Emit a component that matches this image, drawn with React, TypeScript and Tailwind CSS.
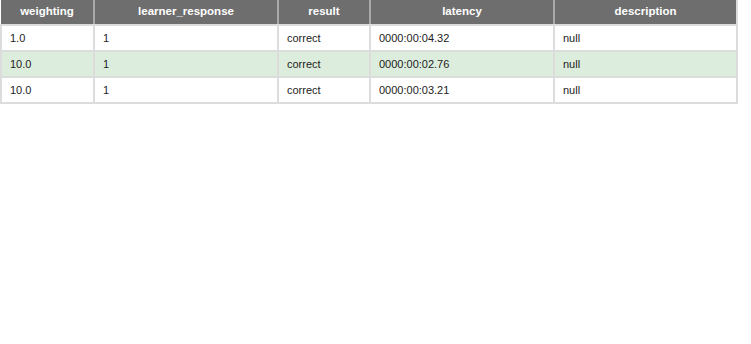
import React from "react";

const columns = ["weighting", "learner_response", "result", "latency", "description"];
const widths = [93, 184, 92, 184, 183];

const rows = [
  ["1.0", "1", "correct", "0000:00:04.32", "null"],
  ["10.0", "1", "correct", "0000:00:02.76", "null"],
  ["10.0", "1", "correct", "0000:00:03.21", "null"],
];

export default function App() {
  return (
    <div className="min-h-[344px] w-[751px] bg-white" style={{ fontFamily: '"Liberation Sans", Arial, sans-serif' }}>
      <table className="w-[736px] table-fixed border-collapse">
        <colgroup>
          {widths.map((w, i) => (
            <col key={i} style={{ width: w }} />
          ))}
        </colgroup>
        <thead>
          <tr className="h-[25px] bg-[#6e6e6e]">
            {columns.map((c) => (
              <th
                key={c}
                className="border-2 border-t-0 border-[#dcdcdc] border-x-[#a8a8a8] first:border-l-0 last:border-r-[#dcdcdc] p-0 text-center text-[11.5px] font-bold text-white"
              >
                {c}
              </th>
            ))}
          </tr>
        </thead>
        <tbody>
          {rows.map((r, i) => (
            <tr key={i} className={i === 1 ? "h-[26px] bg-[#ddeddd]" : "h-[26px] bg-white"}>
              {r.map((v, j) => (
                <td key={j} className="border-2 border-[#dcdcdc] px-[8px] py-0 text-left text-[11px] text-[#222]">
                  {v}
                </td>
              ))}
            </tr>
          ))}
        </tbody>
      </table>
    </div>
  );
}
